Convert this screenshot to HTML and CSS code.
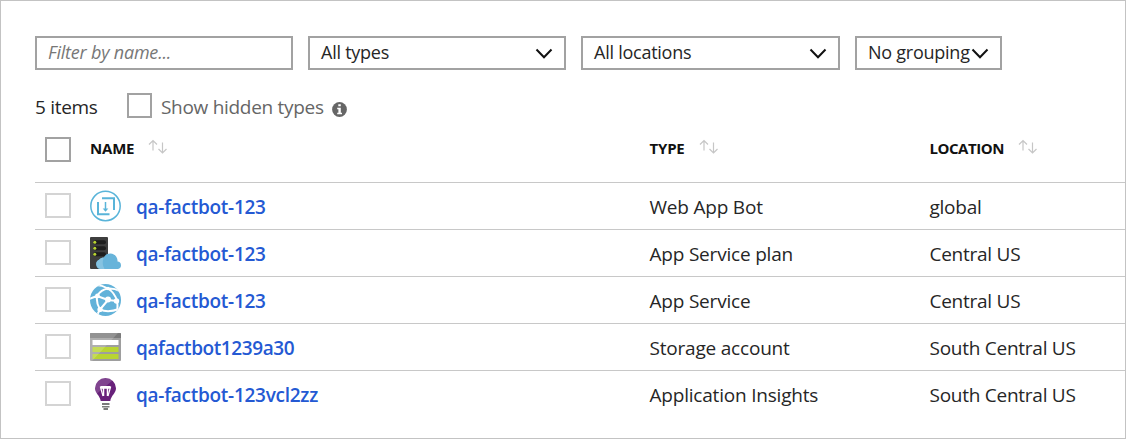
FILE: index.html
```html
<!DOCTYPE html>
<html lang="en">
<head>
<meta charset="utf-8">
<title>Resources</title>
<link rel="stylesheet" href="styles.css">
</head>
<body>
<svg class="defs" width="0" height="0">
  <symbol id="chevron" viewBox="0 0 18 12"><path d="M1.500 1.500L9 9.300L16.500 1.500" fill="none" stroke="#111" stroke-width="2"/></symbol>
  <symbol id="sort" viewBox="0 0 20 16"><path d="M5 11.500V1.500M1 5.500L5 1.500L9 5.500M14.500 3.500V14M10.500 10L14.500 14L18.500 10" fill="none" stroke="#c6c6c6" stroke-width="1.200"/></symbol>
</svg>
<main class="panel">
  <div class="filters">
    <div class="field field-search"><span class="placeholder">Filter by name...</span></div>
    <div class="field field-types"><span class="value">All types</span><svg class="chevron"><use href="#chevron"/></svg></div>
    <div class="field field-locations"><span class="value">All locations</span><svg class="chevron"><use href="#chevron"/></svg></div>
    <div class="field field-group"><span class="value">No grouping</span><svg class="chevron"><use href="#chevron"/></svg></div>
  </div>
  <div class="summary">
    <span class="count">5 items</span>
    <span class="box box-hidden"></span>
    <span class="hidden-label">Show hidden types</span>
    <svg class="info" viewBox="0 0 15 15"><circle cx="7.500" cy="7.500" r="7.400" fill="#666"/><path d="M6.300 2.200h2.500v2H6.300zM5.200 5.700h3.600v5h1.200v1.500H5.200v-1.500h1.200V7.200H5.200z" fill="#fff"/></svg>
  </div>
  <div class="table">
    <div class="row head">
      <span class="box box-all"></span>
      <span class="cell h-name">NAME<svg class="sort"><use href="#sort"/></svg></span>
      <span class="cell h-type">TYPE<svg class="sort"><use href="#sort"/></svg></span>
      <span class="cell h-loc">LOCATION<svg class="sort"><use href="#sort"/></svg></span>
    </div>
    <div class="row">
      <span class="box"></span>
      <svg class="icon" viewBox="0 0 31 32"><g fill="none" stroke="#59b4d9"><circle cx="15.500" cy="16" r="14.700" stroke-width="1.500"/><path d="M12 8.200H24V20M8 12V24.300H19.500" stroke-width="2"/><path d="M15.500 12V20.500" stroke-width="1.500"/></g><path d="M12.700 18.500h5.600L15.500 21.800z" fill="#59b4d9"/></svg>
      <a class="name">qa-factbot-123</a><span class="type">Web App Bot</span><span class="loc">global</span>
    </div>
    <div class="row">
      <span class="box"></span>
      <svg class="icon" viewBox="0 0 31 32"><path d="M1 0H17Q18 0 18 1V32H1Q0 32 0 31V1Q0 0 1 0z" fill="#3e3e3e"/><g fill="#1e1e1e"><rect x="3" y="3.300" width="13" height="4" rx="2"/><rect x="3" y="9.300" width="13" height="4" rx="2"/><rect x="3" y="15.300" width="13" height="4" rx="2"/></g><g fill="#b8d432"><circle cx="4.800" cy="5.300" r="1.500"/><circle cx="4.800" cy="11.300" r="1.500"/><circle cx="4.800" cy="17.300" r="1.500"/></g><path d="M11 32A4.800 4.800 0 0 1 10 22.500A5 5 0 0 1 13.700 20.500A7.300 7.300 0 0 1 27.500 24.500A3.800 3.800 0 0 1 28 32z" fill="#68b4da"/><path d="M11 32A4.800 4.800 0 0 1 8.800 23A5 5 0 0 1 13.700 20.500Q11.500 27 14.500 32z" fill="#86c3e1"/></svg>
      <a class="name">qa-factbot-123</a><span class="type">App Service plan</span><span class="loc">Central US</span>
    </div>
    <div class="row">
      <span class="box"></span>
      <svg class="icon" viewBox="0 0 31 32"><defs><clipPath id="globe"><ellipse cx="15.500" cy="16" rx="15.500" ry="16"/></clipPath></defs><g clip-path="url(#globe)"><rect width="31" height="32" fill="#62b2d9"/><g fill="none" stroke="#fff" stroke-width="2"><path d="M7 12Q11 5.500 18 4.500Q24 4 30 7M6 1Q12 1 18 4.500Q25 9 27 17Q28 22 27 27M7 12L-1 15M7 12L18 16L27 17M18 16L10 25.500M7 12Q6 19 10 25.500L7 31M10 25.500Q18 29 29 25" /></g><g fill="#fff"><circle cx="7.500" cy="12" r="2.400"/><circle cx="18" cy="15.500" r="3"/><circle cx="26.500" cy="17" r="2.700"/><circle cx="10" cy="25.500" r="2.600"/><circle cx="18" cy="4.500" r="1.700"/></g></g></svg>
      <a class="name">qa-factbot-123</a><span class="type">App Service</span><span class="loc">Central US</span>
    </div>
    <div class="row">
      <span class="box"></span>
      <svg class="icon" viewBox="0 0 31 32"><rect y="2" width="31" height="28" rx="1" fill="#9e9e9e"/><path d="M0 7V3Q0 2 1 2H30Q31 2 31 3V7z" fill="#7a7a7a"/><path d="M2.500 9h26v5h-26z" fill="#fff"/><path d="M2.500 16h26v5h-26zM2.500 23h26v5h-26z" fill="#b8d432"/><path d="M0 30V3Q0 2 1 2H28L2 30z" fill="#fff" opacity=".18"/></svg>
      <a class="name name-storage">qafactbot1239a30</a><span class="type">Storage account</span><span class="loc">South Central US</span>
    </div>
    <div class="row">
      <span class="box"></span>
      <svg class="icon" viewBox="0 0 31 32"><path d="M15.500 0A10.400 10.400 0 0 0 5 10.200C5 15 10 17.500 10.700 23H20.300C21 17.500 26 15 26 10.200A10.400 10.400 0 0 0 15.500 0z" fill="#68217a"/><path d="M15.500 0A10.400 10.400 0 0 0 5 10.200Q5 13 7 15.500L22.500 2.400A10.400 10.400 0 0 0 15.500 0z" fill="#fff" opacity=".16"/><path d="M13.500 18V10H11M17.500 18V10H20M10.800 8.800H20.200M13.500 10H17.500" fill="none" stroke="#fff" stroke-width="1.500"/><path d="M10.300 8.500L13 18M20.700 8.500L18 18" fill="none" stroke="#fff" stroke-width="1.200"/><path d="M12 25h7.500v2H12zM12 28h7.500v1.500H12zM13.500 30h4.500v2h-4.500z" fill="#7a7a7a"/></svg>
      <a class="name">qa-factbot-123vcl2zz</a><span class="type">Application Insights</span><span class="loc">South Central US</span>
    </div>
  </div>
</main>
</body>
</html>
```
FILE: styles.css
```css
* { box-sizing: border-box; }
body { margin: 0; font-family: "Open Sans", "Noto Sans", sans-serif; background: #fff; color: #262626; }
.defs { display: block; }
.panel { width: 1126px; height: 439px; border: 1px solid #c3c3c3; padding: 35px 0 0 34px; overflow: hidden; }
.filters { display: flex; gap: 15px; height: 34px; }
.field { display: flex; align-items: center; justify-content: space-between; width: 258px; height: 34px; border: 2px solid #a2a2a2; padding: 0 11px; font-size: 18px; letter-spacing: -0.25px; white-space: nowrap; }
.field-locations { width: 259px; }
.field-group { width: 147px; }
.placeholder, .value { padding-bottom: 2px; }
.placeholder { font-style: italic; color: #777; letter-spacing: -0.2px; }
.chevron { width: 18px; height: 12px; flex: none; margin: 2px 0 0 -6px; }
.summary { display: flex; align-items: center; height: 25px; margin-top: 23px; font-size: 19px; letter-spacing: -0.3px; white-space: nowrap; }
.count { width: 92px; padding-top: 2px; }
.box { width: 26px; height: 25px; border: 2px solid #d4d4d4; flex: none; }
.box-hidden { width: 25px; border-color: #a2a2a2; }
.box-all { border-color: #a2a2a2; }
.hidden-label { width: 170px; padding: 2px 0 0 9px; color: #666; }
.info { width: 15px; height: 15px; margin: 8px 0 0 10px; }
.row { display: grid; grid-template-columns: 26px 19px 31px 15px 513.5px 280px 1fr; align-items: center; height: 47px; padding-left: 10px; border-top: 1px solid #c8c8c8; font-size: 19px; letter-spacing: -0.2px; white-space: nowrap; }
.row .box { grid-column: 1; margin-bottom: 2px; }
.icon { grid-column: 3; width: 31px; height: 32px; }
.name { grid-column: 5; color: #2459d3; font-weight: 600; letter-spacing: -0.27px; padding-top: 1px; }
.name-storage { letter-spacing: -0.42px; }
.type { grid-column: 6; padding-top: 1px; }
.loc { grid-column: 7; padding-top: 1px; letter-spacing: -0.26px; }
.head { height: 64px; border-top: 0; align-items: start; padding-top: 19px; }
.cell { display: flex; align-items: center; font-size: 15px; font-weight: 700; color: #111; height: 22px; letter-spacing: -0.2px; }
.h-name { grid-column: 3 / 6; }
.h-type { grid-column: 6; }
.h-loc { grid-column: 7; padding: 0; letter-spacing: -0.45px; }
.sort { width: 20px; height: 16px; margin: -3px 0 0 14px; }
```
